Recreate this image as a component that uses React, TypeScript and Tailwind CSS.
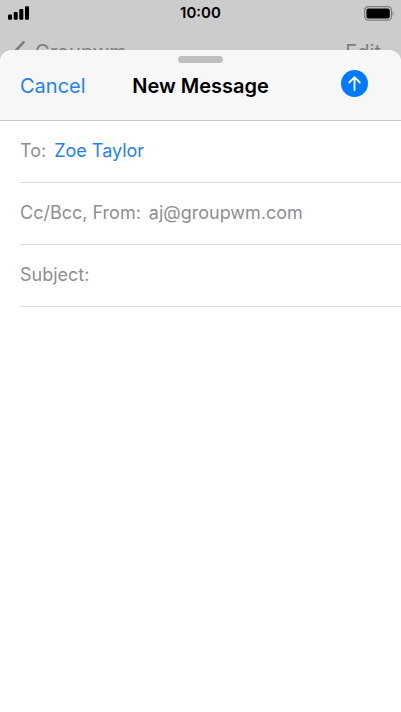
import type { ReactNode } from "react";

function SignalIcon() {
  return (
    <svg viewBox="0 0 21 14" className="ml-0.5 h-[14px] w-[21px]" fill="currentColor" aria-hidden="true">
      <rect x="0" y="8.5" width="4" height="5.2" rx="1" />
      <rect x="5.7" y="6" width="4" height="7.7" rx="1" />
      <rect x="11.3" y="3" width="4" height="10.7" rx="1" />
      <rect x="17" y="0.2" width="4" height="13.5" rx="1" />
    </svg>
  );
}

function BatteryIcon() {
  return (
    <svg viewBox="0 0 31 15" className="h-[15px] w-[31px]" aria-hidden="true">
      <rect x="0.7" y="0.7" width="26.8" height="13.4" rx="3.6" fill="none" stroke="#7c7c7c" strokeWidth="1.2" />
      <rect x="2.4" y="2.4" width="23.4" height="10" rx="2" fill="#000" />
      <path d="M28.7 5.2c1.3.6 1.3 3.9 0 4.5z" fill="#7c7c7c" />
    </svg>
  );
}

function StatusBar() {
  return (
    <div className="flex h-[26px] items-center justify-between px-[6px] text-black">
      <div className="flex flex-1">
        <SignalIcon />
      </div>
      <time className="text-[15px] font-semibold leading-5">10:00</time>
      <div className="flex flex-1 justify-end">
        <BatteryIcon />
      </div>
    </div>
  );
}

// Sits behind the compose sheet, only its top edge shows.
function MailboxNav() {
  return (
    <nav className="flex h-6 items-start justify-between pl-3 pr-5 pt-3 text-[20px] leading-7 text-[#7d7d7d]">
      <a href="#mailboxes" className="flex items-start gap-[10px]">
        <svg viewBox="0 0 13 24" className="mt-[3px] h-6 w-[13px] shrink-0" fill="none" stroke="currentColor" strokeWidth="2.6" strokeLinecap="round" strokeLinejoin="round" aria-hidden="true">
          <path d="M11.5 1.3 1.5 11.8 11.5 22.3" />
        </svg>
        Groupwm
      </a>
      <button type="button" className="leading-7">
        Edit
      </button>
    </nav>
  );
}

function SheetHeader() {
  return (
    <header className="rounded-t-xl border-b border-[#c5c5c7] bg-[#f7f7f7] pb-5 pt-[6px]">
      <div className="mx-auto h-[7px] w-[45px] rounded-full bg-[#bfbfc0]" />
      <div className="mt-[9px] flex items-center px-5 text-[20px] leading-7">
        <div className="flex flex-1">
          <button type="button" className="text-[#1f82ee]">
            Cancel
          </button>
        </div>
        <h1 className="font-semibold text-black">New Message</h1>
        <div className="-mt-1.5 flex flex-1 justify-end">
          <button type="button" aria-label="Send" className="mr-[13px]">
            <svg viewBox="0 0 27 27" className="h-[27px] w-[27px]" aria-hidden="true">
              <circle cx="13.5" cy="13.5" r="13.5" fill="#007aff" />
              <path d="M13.5 20.2V7.4M8.2 12.5l5.3-5.3 5.3 5.3" fill="none" stroke="#fff" strokeWidth="1.8" strokeLinecap="round" strokeLinejoin="round" />
            </svg>
          </button>
        </div>
      </div>
    </header>
  );
}

function Field({ id, label, children }: { id: string; label: string; children: ReactNode }) {
  return (
    <div className="ml-5 flex items-center gap-2 border-b border-[#dcdcde] pb-[17px] pt-4 text-[18px] leading-7 text-[#8e8e92]">
      <label htmlFor={id} className="shrink-0">
        {label}
      </label>
      {children}
    </div>
  );
}

export default function App() {
  return (
    <div className="flex min-h-screen flex-col bg-[#cccccc] font-['Inter','Liberation_Sans',sans-serif]">
      <StatusBar />
      <MailboxNav />
      <main className="relative z-10 flex flex-1 flex-col rounded-t-xl bg-white">
        <SheetHeader />
        <form>
          <Field id="to" label="To:">
            <input id="to" type="text" defaultValue="Zoe Taylor" className="min-w-0 flex-1 bg-transparent text-[#1f82ee] outline-none" />
          </Field>
          <Field id="from" label="Cc/Bcc, From:">
            <input id="from" type="text" defaultValue="aj@groupwm.com" className="min-w-0 flex-1 bg-transparent outline-none" />
          </Field>
          <Field id="subject" label="Subject:">
            <input id="subject" type="text" className="min-w-0 flex-1 bg-transparent outline-none" />
          </Field>
        </form>
      </main>
    </div>
  );
}
